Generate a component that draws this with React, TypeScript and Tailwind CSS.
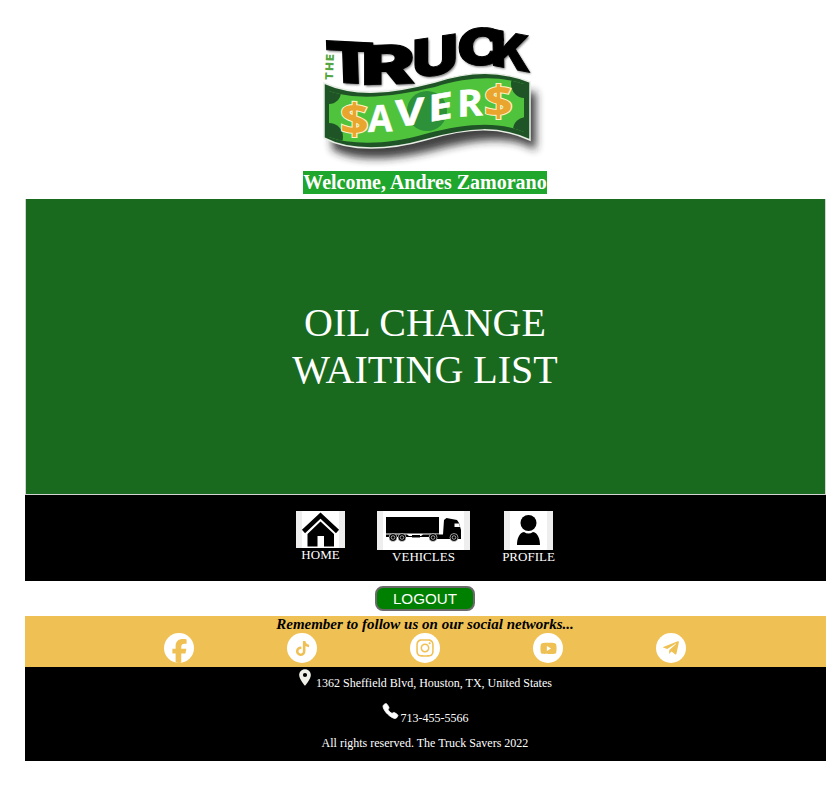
import React from "react";
import { FaTiktok, FaInstagram, FaYoutube, FaTelegramPlane } from "react-icons/fa";
import { FaFacebookF } from "react-icons/fa6";
import { IoCall } from "react-icons/io5";
import { MdLocationOn } from "react-icons/md";

const letters = [
  { c: "T", m: "matrix(1.46 0.07 0.04 1.14 326 82)" },
  { c: "R", m: "matrix(1.62 -0.05 0 1.08 361 85)" },
  { c: "U", m: "matrix(1.28 -0.2 0 1.06 412 79)" },
  { c: "C", m: "matrix(1.3 -0.05 0 1.02 457 66)" },
  { c: "K", m: "matrix(1.05 0.2 0.02 1 491 65)" },
];

function Logo() {
  return (
    <svg className="block h-[145px] w-[235px] overflow-visible" viewBox="315 20 235 145" role="img" aria-label="The Truck Savers">
      <defs>
        <filter id="soft" x="-20%" y="-30%" width="140%" height="180%"><feGaussianBlur stdDeviation="4" /></filter>
        <filter id="small" x="-20%" y="-20%" width="140%" height="140%"><feGaussianBlur stdDeviation="0.8" /></filter>
        <clipPath id="note"><path d="M329 91C360 102 400 95 435 87C470 76 500 76 524 84V132C500 122 470 122 425 134C390 145 350 145 329 137Z" /></clipPath>
      </defs>
      <path d="M332 100L536 92V150C510 134 475 139 430 151C385 162 350 160 332 149Z" fill="#222" opacity=".85" filter="url(#soft)" />
      <path d="M324 83C360 99 400 91 435 82C470 71 500 70 530 82V140C500 126 470 127 425 140C390 150 350 152 324 138Z" fill="#1f5526" stroke="#e8eee5" strokeWidth="1.5" />
      <g clipPath="url(#note)">
        <rect x="324" y="70" width="210" height="80" fill="#50c33d" />
        <circle cx="427" cy="111" r="20" fill="#2c9139" />
        <circle cx="329" cy="92" r="12" fill="#1f5526" />
        <circle cx="329" cy="137" r="14" fill="#1f5526" />
        <circle cx="525" cy="84" r="14" fill="#1f5526" />
        <circle cx="526" cy="130" r="13" fill="#1f5526" />
      </g>
      <g fontFamily="Inter, sans-serif" fontWeight="900" fontSize="50">
        <g fill="#777" filter="url(#small)" transform="translate(1.2 1.5)">
          {letters.map((l) => <text key={l.c} transform={l.m} aria-hidden="true">{l.c}</text>)}
        </g>
        {letters.map((l) => <text key={l.c} transform={l.m} fill="#000" stroke="#000" strokeWidth="0.9">{l.c}</text>)}
      </g>
      <text transform="translate(333 80) rotate(-88)" fontFamily="Inter, sans-serif" fontWeight="900" fontSize="11" letterSpacing="1.6" fill="#55a542">THE</text>
      <g fontFamily="Open Sans, sans-serif" fontWeight="700" fontSize="37" fill="#fff" stroke="#fff" strokeWidth=".5">
        <text transform="matrix(0.96 -0.03 0 1 368 132)">A</text>
        <text transform="matrix(1.22 -0.14 0 1 395 127)">V</text>
        <text transform="matrix(1.2 -0.2 0 1 428 122)">E</text>
        <text transform="matrix(1.06 -0.07 0 1 457 117)">R</text>
      </g>
      <g fontFamily="Open Sans, sans-serif" fontWeight="700" fontSize="42" fill="#e9a52d" stroke="#fff3c5" strokeWidth="2" paintOrder="stroke">
        <text transform="matrix(1.2 0.04 0 1.02 340 134)">$</text>
        <text transform="matrix(1.2 -0.04 0 1.02 484 117)">$</text>
      </g>
    </svg>
  );
}

function HomeIcon() {
  return (
    <svg className="block h-[37px] w-[49px]" viewBox="0 0 49 37">
      <rect width="49" height="37" fill="#eee" /><rect x="6" width="37" height="37" fill="#fff" />
      <path d="M7.5 20.5L24.5 4.5L41.5 20.5" fill="none" stroke="#000" strokeWidth="4.5" />
      <path d="M24.5 10.5L38 23V35.5H28V25H21.5V35.5H11.5V23Z" fill="#000" />
    </svg>
  );
}

function TruckIcon() {
  return (
    <svg className="block h-[39px] w-[93px]" viewBox="0 0 93 39">
      <rect width="93" height="39" fill="#eee" /><rect x="6" width="81" height="39" fill="#fff" />
      <path d="M9 6H62V22.5H9ZM9 23.5H30L32 25H44L46 23.5H62V27H57L52 26H9Z" fill="#000" />
      <path d="M35 24H43V26.5H35Z" fill="#000" />
      <path d="M67 9L69.5 7L80 9L82 12L84 19V28H56L53 26V23.5H66Z" fill="#000" />
      <path d="M77.5 12.5H82L83 16H77.5Z" fill="#fff" />
      <g fill="#000" stroke="#fff" strokeWidth=".6">
        {[16, 25, 56, 77].map((x) => <g key={x}><circle cx={x} cy="26.5" r="4" /><circle cx={x} cy="26.5" r="1.8" /></g>)}
      </g>
    </svg>
  );
}

function ProfileIcon() {
  return (
    <svg className="block h-[39px] w-[49px]" viewBox="0 0 49 39">
      <rect width="49" height="39" fill="#eee" /><rect x="6" width="37" height="39" fill="#fff" />
      <circle cx="24.5" cy="12" r="8" fill="#000" />
      <path d="M13 34C13 28 15 22 20 21Q24.5 24 29 21C34 22 36 28 36 34Z" fill="#000" />
    </svg>
  );
}

const disc = "flex h-[30px] w-[30px] items-center justify-center rounded-full bg-white";
const navItem = "flex flex-col items-center";
const navLabel = "-mt-px whitespace-nowrap";

export default function App() {
  return (
    <div className="h-[789px] w-[838px] overflow-hidden bg-white pl-[25px] pt-5 font-['Liberation_Serif',serif]">
      <div className="w-[801px]">
        <header className="flex h-[179px] flex-col items-center">
          <div className="ml-[14px]"><Logo /></div>
          <h1 className="mt-[6px] mr-px h-[23px] bg-[#1fa62c] whitespace-nowrap text-[20px] leading-[23px] font-bold text-white">Welcome, Andres Zamorano</h1>
        </header>
        <main className="flex h-[296px] items-center justify-center border border-t-0 border-[#d3d3d3] bg-[#196a1e] pr-px pb-[2px] text-center text-[40px] leading-[47px] text-white">
          <p>OIL CHANGE<br />WAITING LIST</p>
        </main>
        <nav className="flex h-[86px] items-start bg-black pt-4 pl-[271px] text-[13px] leading-[15px] text-white">
          <a className={navItem + " w-[49px]"}><HomeIcon /><span className={navLabel}>HOME</span></a>
          <a className={navItem + " ml-8 w-[93px]"}><TruckIcon /><span className={navLabel}>VEHICLES</span></a>
          <a className={navItem + " ml-[34px] w-[49px]"}><ProfileIcon /><span className={navLabel}>PROFILE</span></a>
        </nav>
        <div className="flex h-[35px] justify-center pt-[5px] pr-px">
          <button className="h-[25px] w-[100px] rounded-lg border-2 border-[#696969] bg-[#008000] font-['Liberation_Sans',sans-serif] text-[15.2px] leading-[21px] text-white">LOGOUT</button>
        </div>
        <section className="h-[51px] bg-[#efc155]">
          <p className="h-[17px] pr-px text-center text-[15px] leading-[17px] font-bold italic text-black">Remember to follow us on our social networks...</p>
          <div className="flex gap-[93px] pl-[139px] text-[#efc155]">
            <span className={disc + " overflow-hidden"}><FaFacebookF className="mt-[6px] h-[25px] w-[17px]" /></span>
            <span className={disc}><FaTiktok size={15} /></span>
            <span className={disc}><FaInstagram size={20} /></span>
            <span className={disc}><FaYoutube size={17} /></span>
            <span className={disc}><FaTelegramPlane size={18} /></span>
          </div>
        </section>
        <footer className="h-[94px] bg-black text-[12px] text-white">
          <p className="flex h-[35px] justify-center gap-px pr-1"><MdLocationOn className="h-[21px] w-5 text-[#f0f0e8]" /><span className="pt-[9px] leading-[14px]">1362 Sheffield Blvd, Houston, TX, United States</span></p>
          <p className="flex h-[34px] justify-center gap-[2px] pr-px"><IoCall className="h-[18px] w-[17px]" stroke="#fff" strokeWidth="24" /><span className="pt-[9px] leading-[14px]">713-455-5566</span></p>
          <p className="pr-px text-center leading-[14px]">All rights reserved. The Truck Savers 2022</p>
        </footer>
      </div>
    </div>
  );
}
